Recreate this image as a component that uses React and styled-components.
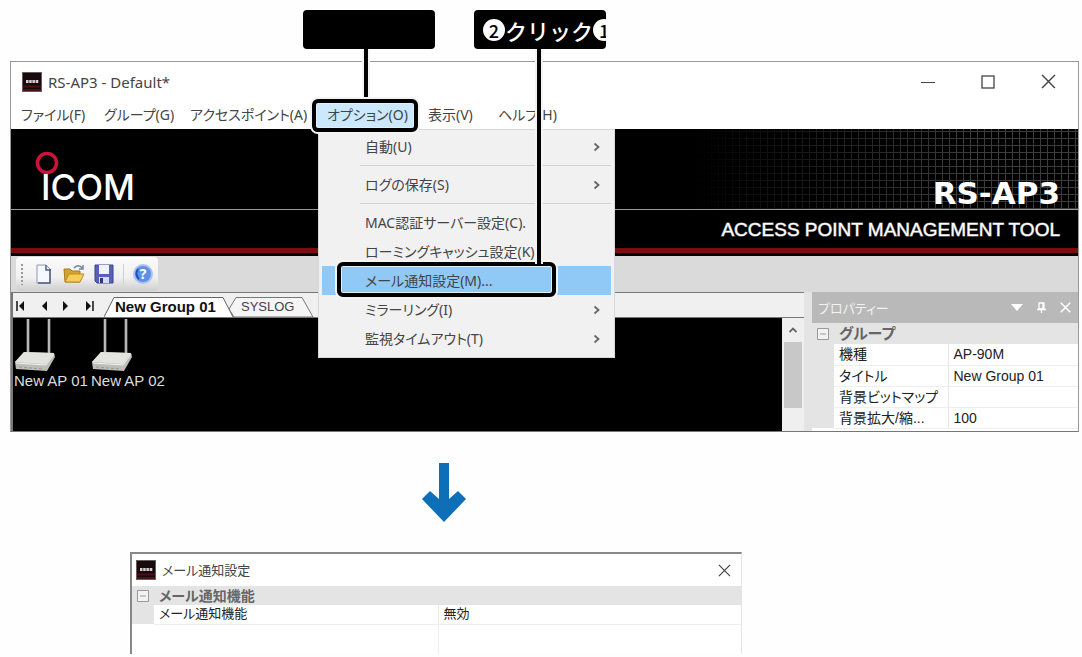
import React from "react";
import styled, { createGlobalStyle, css } from "styled-components";

const GlobalStyle = createGlobalStyle`
  * {
    box-sizing: border-box;
  }
  body {
    margin: 0;
    background: #fefefe;
    color: #444;
    font-family: "Noto Sans", "Noto Sans CJK JP", sans-serif;
    font-size: 14px;
    line-height: 20px;
    font-feature-settings: "palt";
  }
  button {
    margin: 0;
    padding: 0;
    border: 0;
    background: none;
    color: inherit;
    font: inherit;
    font-feature-settings: inherit;
    text-align: left;
    white-space: nowrap;
  }
  svg {
    display: block;
  }
`;

const Page = styled.main`
  padding: 10px 3px 4px 10px;
`;

/* callouts above the window */

const Callouts = styled.div`
  display: flex;
  gap: 39px;
  height: 51px;
  padding-left: 293px;
`;

const Callout = styled.div`
  position: relative;
  z-index: 5;
  width: 132px;
  height: 39px;

  &::after {
    content: "";
    position: absolute;
    top: 39px;
    left: ${(p) => p.$lineLeft}px;
    width: 4px;
    height: ${(p) => p.$lineHeight}px;
    background: #000;
    box-shadow: 2px 0 0 #f4f4f4, -2px 0 0 #f4f4f4;
  }
`;

const CalloutLabel = styled.div`
  display: flex;
  align-items: center;
  height: 39px;
  padding-left: 9px;
  overflow: hidden;
  border-radius: 4px;
  background: #000;
  color: #fff;
  font-family: "Noto Sans CJK JP", sans-serif;
  font-size: 22px;
  font-weight: 500;
  font-feature-settings: normal;
  white-space: nowrap;
`;

const Num = styled.span`
  flex: none;
  width: 22px;
  height: 22px;
  border-radius: 50%;
  background: #fff;
  color: #000;
  font-size: 18px;
  line-height: 22px;
  text-align: center;
`;

const Outline = styled.span`
  position: absolute;
  z-index: 6;
  top: ${(p) => p.$top}px;
  left: ${(p) => p.$left}px;
  width: ${(p) => p.$width}px;
  height: ${(p) => p.$height}px;
  border: 4px solid #000;
  border-radius: 6px;
  box-shadow: 0 0 0 2px #f4f4f4, inset 0 0 0 1px #e4eef5;
  pointer-events: none;
`;

/* main window */

const AppWindow = styled.section`
  border: 1px solid #999;
  border-bottom-color: #777;
  background: #fff;
`;

const TitleBar = styled.header`
  display: flex;
  align-items: center;
  height: ${(p) => p.$height}px;
  padding-left: ${(p) => p.$pad}px;
`;

const Title = styled.h1`
  flex: 1;
  margin: 0 0 0 6px;
  font-size: ${(p) => p.$size}px;
  font-weight: 400;
`;

const WindowButton = styled.button`
  display: flex;
  justify-content: center;
  width: ${(p) => p.$width}px;
`;

const MenuBar = styled.nav`
  display: grid;
  grid-template-columns: 83px 86px 137px 101px 70px 80px;
  height: 28px;
`;

const MenuCell = styled.div`
  position: relative;
`;

const MenuButton = styled.button`
  width: 100%;
  height: 28px;
  padding-left: 10px;
  ${(p) =>
    p.$open &&
    css`
      width: 96px;
      background: #cce8ff;
    `}
`;

const Dropdown = styled.ul`
  position: absolute;
  z-index: 3;
  top: 28px;
  left: 1px;
  width: 297px;
  margin: 0;
  padding: 3px 4px 5px;
  list-style: none;
  background: #f1f1f1;
  box-shadow: inset 0 0 0 1px #d8d8d8;
`;

const DropdownItem = styled.li`
  position: relative;
`;

const DropdownButton = styled.button`
  display: flex;
  align-items: center;
  justify-content: space-between;
  width: 100%;
  height: 29px;
  padding: 0 10px 0 43px;
  background: ${(p) => (p.$active ? "#90c8f6" : "transparent")};
`;

const Separator = styled.li`
  height: 9px;
  margin-left: 38px;
  border-bottom: 4px solid #f1f1f1;
  box-shadow: inset 0 -1px 0 #d2d2d2;
`;

/* brand banner */

const Banner = styled.div`
  background: #000;
  color: #fff;
`;

const BannerTop = styled.div`
  display: flex;
  justify-content: space-between;
  align-items: flex-end;
  height: 81px;
  padding: 0 18px 4px 24px;
  border-bottom: 1px solid #999;
  background: linear-gradient(90deg, #000 64%, transparent 90%),
    repeating-linear-gradient(90deg, #3c3c3c 0 1px, transparent 1px 7px),
    repeating-linear-gradient(0deg, #3c3c3c 0 1px, transparent 1px 7px), #000;
`;

const Brand = styled.div`
  height: 54px;
  font-family: Inter, sans-serif;
  font-size: 35px;
  font-weight: 500;
  line-height: 24px;

  span {
    padding-left: 6px;
  }
`;

const Product = styled.div`
  font-family: "DejaVu Sans", sans-serif;
  font-size: 31px;
  font-weight: 700;
  line-height: 24px;
`;

const BannerBottom = styled.div`
  height: 46px;
  padding: 10px 18px 0;
  border-bottom: 3px solid #000;
  box-shadow: inset 0 -5px 0 #7c0c10;
  font-family: "Liberation Sans", sans-serif;
  font-size: 19px;
  text-align: right;
  -webkit-text-stroke: 1px #ffffff88;
`;

const ToolbarRow = styled.div`
  height: 36px;
  padding: 1px 5px;
  background: #dadada;
`;

const Toolbar = styled.div`
  display: flex;
  align-items: center;
  gap: 9px;
  width: 142px;
  height: 34px;
  padding-left: 5px;
  border-radius: 4px;
  background: linear-gradient(#fbfbfb, #f0f0f0 60%, #cfcfcf);
`;

const Grip = styled.span`
  width: 2px;
  height: 21px;
  margin-right: 2px;
  background: repeating-linear-gradient(#999 0 2px, transparent 2px 4px);
`;

const ToolDivider = styled.span`
  width: 1px;
  height: 20px;
  background: #d0d0d0;
`;

/* work area */

const WorkArea = styled.div`
  display: flex;
  gap: 8px;
  background: #e4e4e4;
`;

const MapPane = styled.div`
  flex: 1;
  border-left: 2px solid #777;
`;

const TabStrip = styled.div`
  display: flex;
  align-items: flex-end;
  height: 26px;
  border-top: 1px solid #777;
  border-bottom: 1px solid #777;
  background: #f0f0f0;
  font-family: "Liberation Sans", sans-serif;
`;

const TabNav = styled.div`
  display: flex;
  align-items: center;
  justify-content: space-between;
  width: 78px;
  height: 23px;
  margin-left: 3px;
  margin-right: 10px;
`;

const TabButton = styled.button`
  position: relative;
  z-index: ${(p) => (p.$active ? 1 : 0)};
  width: ${(p) => p.$width}px;
  height: 20px;
  margin-left: ${(p) => (p.$active ? 0 : -8)}px;
  padding-left: ${(p) => (p.$active ? 11 : 15)}px;
  color: ${(p) => (p.$active ? "#111" : "#444")};
  font-size: ${(p) => (p.$active ? 15 : 13)}px;
  font-weight: ${(p) => (p.$active ? 700 : 400)};
  line-height: 18px;

  svg {
    position: absolute;
    z-index: -1;
    top: 0;
    left: 0;
  }
`;

const MapBody = styled.div`
  display: flex;
  height: 113px;
`;

const MapCanvas = styled.div`
  flex: 1;
  display: flex;
  align-items: flex-start;
  padding: 1px;
  background: #000;
`;

const AccessPoint = styled.figure`
  width: 77px;
  margin: 0;
  color: #ddd;
  font-family: "Liberation Sans", sans-serif;
  font-size: 15px;
  line-height: 18px;
  white-space: nowrap;
`;

const ScrollTrack = styled.div`
  display: flex;
  flex-direction: column;
  align-items: center;
  width: 22px;
  background: #efefef;
`;

const ScrollUp = styled.button`
  display: flex;
  align-items: center;
  justify-content: center;
  width: 100%;
  height: 24px;
`;

const ScrollThumb = styled.div`
  width: 18px;
  height: 66px;
  background: #c8c8c8;
`;

const PropertyPane = styled.aside`
  width: 266px;
  height: 139px;
  overflow: hidden;
  background: #fff;
`;

const PropertyHead = styled.div`
  display: flex;
  align-items: center;
  gap: 14px;
  height: 31px;
  padding: 0 7px 0 6px;
  background: #b9b9b9;
  color: #f2f2f2;

  h2 {
    flex: 1;
    margin: 0;
    font-size: 13px;
    font-weight: 400;
  }
`;

const PropertyTable = styled.table`
  width: 100%;
  border-collapse: collapse;
  table-layout: fixed;
  color: #222;
  font-family: "Liberation Sans", "Noto Sans CJK JP", sans-serif;
  font-size: ${(p) => p.$size}px;
  line-height: 18px;

  tr {
    height: ${(p) => p.$row}px;
  }
  th,
  td {
    padding: 0 0 0 5px;
    border-bottom: 1px solid #eee;
    text-align: left;
    font-weight: 400;
    white-space: nowrap;
  }
  td {
    border-left: 1px solid #e8e8e8;
  }
  th:first-child,
  td:first-child {
    padding: 0;
    border: 0;
    background: #e4e4e4;
  }
  .group th {
    border: 0;
    background: #e4e4e4;
    color: #666;
    font-size: ${(p) => p.$size + 1}px;
    font-weight: 700;
  }
`;

/* lower half */

const Arrow = styled.div`
  padding: 31px 0 0 412px;
  height: 120px;
`;

const Dialog = styled.section`
  max-width: 612px;
  margin-left: 120px;
  border: 1px solid #e4e4e4;
  border-top: 2px solid #888;
  border-left: 2px solid #888;
  border-bottom: 0;
  background: #fff;
`;

const DialogRest = styled.div`
  width: 307px;
  height: 29px;
  border-right: 1px solid #eee;
`;

const WindowIcon = () => (
  <svg width="20" height="20" viewBox="0 0 20 20" aria-hidden="true">
    <rect width="20" height="20" fill="#170b0e" />
    <path d="M1 14.5h18M1 18h18" stroke="#4b1018" strokeWidth="2" />
    <path d="M4 9.5h13" stroke="#d8cfd0" strokeWidth="3" strokeDasharray="2.5 .7" />
    <rect x="0.5" y="0.5" width="19" height="19" fill="none" stroke="#6b5a5c" />
  </svg>
);

const CloseGlyph = ({ size, color = "#444", width = 1.3 }) => (
  <svg width={size} height={size} viewBox="0 0 14 14" aria-hidden="true">
    <path d="M1 1l12 12M13 1L1 13" stroke={color} strokeWidth={width} />
  </svg>
);

const Chevron = ({ up }) => (
  <svg width="8" height="10" viewBox="0 0 8 10" aria-hidden="true">
    <path
      d={up ? "M0.5 7L4 3.5L7.5 7" : "M1.5 1.5L5.5 5L1.5 8.5"}
      fill="none"
      stroke="#666"
      strokeWidth="1.8"
    />
  </svg>
);

const NewFileIcon = () => (
  <svg width="20" height="20" viewBox="0 0 20 20" aria-hidden="true">
    <path d="M3 1h9l4 4v14H3z" fill="#f5f9ff" stroke="#8d9ab5" />
    <path d="M12 1v5h5M16 5v14H4" fill="none" stroke="#4e5f88" strokeWidth="1.5" />
  </svg>
);

const OpenIcon = () => (
  <svg width="22" height="20" viewBox="0 0 22 20" aria-hidden="true">
    <path d="M1 5h6l2 2h8v11H2z" fill="#d4a22e" stroke="#a67c22" />
    <path d="M2 18l4-8h15l-4 8z" fill="#f8cc58" stroke="#b88b28" />
    <path d="M11 4c3-3 6-3 8 0M20 1v4h-4" fill="none" stroke="#71859c" strokeWidth="1.5" />
  </svg>
);

const SaveIcon = () => (
  <svg width="20" height="20" viewBox="0 0 20 20" aria-hidden="true">
    <path d="M1 1h18v18H3l-2-2z" fill="#5960b8" stroke="#39438e" />
    <rect x="5" y="1" width="10" height="9" fill="#eef2ff" />
    <rect x="5" y="13" width="10" height="6" fill="#d6dcf2" />
    <rect x="6" y="14" width="3" height="5" fill="#303778" />
  </svg>
);

const HelpIcon = () => (
  <svg width="20" height="20" viewBox="0 0 20 20" aria-hidden="true">
    <circle cx="10" cy="10" r="9" fill="#5e91e5" stroke="#a9c2ef" strokeWidth="2" />
    <path d="M5 5c-2 3-2 7 1 10" fill="none" stroke="#2450b4" strokeWidth="2" />
    <text x="10" y="15" textAnchor="middle" fill="#fff" fontSize="14" fontWeight="700">?</text>
  </svg>
);

const RouterIcon = () => (
  <svg width="42" height="53" viewBox="0 0 42 53" aria-hidden="true">
    <path d="M14 0v36M35 0v36" stroke="#b9b9b9" strokeWidth="2.6" />
    <path d="M1 43L10 33l30 1 1 4-8 14-31-2z" fill="#bdbdb9" />
    <path d="M1 43l9-10 30 1-8 11z" fill="#e3e3df" />
    <path d="M2 44l30 2 8-11" fill="none" stroke="#f2f2ee" />
    <path d="M5 48l24 2" stroke="#989894" strokeDasharray="3 2" />
  </svg>
);

const BoxIcon = styled.svg`
  margin: 0 auto;
`;

const CollapseIcon = () => (
  <BoxIcon width="12" height="12" viewBox="0 0 12 12" aria-hidden="true">
    <path d="M.5 .5h11v11H.5zM3 6h6" fill="#f2f2f2" stroke="#999" />
  </BoxIcon>
);

const NavIcon = ({ dir, end }) => (
  <svg width="9" height="10" viewBox="0 0 9 10" aria-hidden="true">
    <g transform={dir === "prev" ? undefined : "translate(9 0) scale(-1 1)"}>
      {end && <path d="M1 0v10" stroke="#111" strokeWidth="1.5" />}
      <path d="M8 0v10L3 5z" fill="#111" />
    </g>
  </svg>
);

const menus = [
  "ファイル(F)",
  "グループ(G)",
  "アクセスポイント(A)",
  "オプション(O)",
  "表示(V)",
  "ヘルプ(H)",
];

const options = [
  { label: "自動(U)", sub: true },
  null,
  { label: "ログの保存(S)", sub: true },
  null,
  { label: "MAC認証サーバー設定(C)." },
  { label: "ローミングキャッシュ設定(K)." },
  { label: "メール通知設定(M)...", active: true },
  { label: "ミラーリング(I)", sub: true },
  { label: "監視タイムアウト(T)", sub: true },
];

const properties = [
  ["機種", "AP-90M"],
  ["タイトル", "New Group 01"],
  ["背景ビットマップ", ""],
  ["背景拡大/縮...", "100"],
];

function OptionMenu() {
  return (
    <Dropdown>
      {options.map((o, i) =>
        o === null ? (
          <Separator key={i} />
        ) : (
          <DropdownItem key={o.label}>
            <DropdownButton $active={o.active}>
              {o.label}
              {o.sub && <Chevron />}
            </DropdownButton>
            {o.active && <Outline $top={-4} $left={15} $width={219} $height={35} />}
          </DropdownItem>
        )
      )}
    </Dropdown>
  );
}

function MainWindow() {
  return (
    <AppWindow>
      <TitleBar $height={39} $pad={11}>
        <WindowIcon />
        <Title $size={15}>RS-AP3 - Default*</Title>
        <WindowButton $width={60} aria-label="Minimize">
          <svg width="14" height="14" viewBox="0 0 14 14">
            <path d="M0 7.5h14" stroke="#444" />
          </svg>
        </WindowButton>
        <WindowButton $width={60} aria-label="Maximize">
          <svg width="14" height="14" viewBox="0 0 14 14">
            <rect x="1" y="1" width="12" height="12" fill="none" stroke="#444" strokeWidth="1.3" />
          </svg>
        </WindowButton>
        <WindowButton $width={60} aria-label="Close">
          <CloseGlyph size={15} />
        </WindowButton>
      </TitleBar>
      <MenuBar>
        {menus.map((m, i) => (
          <MenuCell key={m}>
            <MenuButton $open={i === 3}>{m}</MenuButton>
            {i === 3 && <Outline $top={-2} $left={-5} $width={106} $height={33} />}
            {i === 3 && <OptionMenu />}
          </MenuCell>
        ))}
      </MenuBar>
      <Banner>
        <BannerTop>
          <Brand>
            <svg width="24" height="24" viewBox="0 0 24 24" aria-hidden="true">
              <circle cx="12" cy="12" r="9.5" fill="none" stroke="#cc1238" strokeWidth="3.6" />
            </svg>
            <span>ICOM</span>
          </Brand>
          <Product>RS-AP3</Product>
        </BannerTop>
        <BannerBottom>ACCESS POINT MANAGEMENT TOOL</BannerBottom>
      </Banner>
      <ToolbarRow>
        <Toolbar>
          <Grip />
          <button aria-label="New"><NewFileIcon /></button>
          <button aria-label="Open"><OpenIcon /></button>
          <button aria-label="Save"><SaveIcon /></button>
          <ToolDivider />
          <button aria-label="Help"><HelpIcon /></button>
        </Toolbar>
      </ToolbarRow>
      <WorkArea>
        <MapPane>
          <TabStrip>
            <TabNav>
              <button aria-label="First"><NavIcon dir="prev" end /></button>
              <button aria-label="Previous"><NavIcon dir="prev" /></button>
              <button aria-label="Next"><NavIcon dir="next" /></button>
              <button aria-label="Last"><NavIcon dir="next" end /></button>
            </TabNav>
            <TabButton $active $width={130}>
              <svg width="130" height="20" viewBox="0 0 130 20" aria-hidden="true">
                <path d="M0 20L10 .5H119L129 20" fill="#fff" stroke="#666" />
              </svg>
              New Group 01
            </TabButton>
            <TabButton $width={88}>
              <svg width="88" height="20" viewBox="0 0 88 20" aria-hidden="true">
                <path d="M3 12L10 .5H76L87 20H8z" fill="#f5f5f5" stroke="#777" />
              </svg>
              SYSLOG
            </TabButton>
          </TabStrip>
          <MapBody>
            <MapCanvas>
              {["New AP 01", "New AP 02"].map((name) => (
                <AccessPoint key={name}>
                  <RouterIcon />
                  <figcaption>{name}</figcaption>
                </AccessPoint>
              ))}
            </MapCanvas>
            <ScrollTrack>
              <ScrollUp aria-label="Scroll up"><Chevron up /></ScrollUp>
              <ScrollThumb />
            </ScrollTrack>
          </MapBody>
        </MapPane>
        <PropertyPane>
          <PropertyHead>
            <h2>プロパティー</h2>
            <button aria-label="Menu">
              <svg width="12" height="7" viewBox="0 0 12 7"><path d="M0 0h12L6 7z" fill="#fff" /></svg>
            </button>
            <button aria-label="Pin">
              <svg width="9" height="11" viewBox="0 0 9 11">
                <path d="M2 1h5v6H2zM0 7.5h9M4.5 7v4M6 1v6" fill="none" stroke="#fff" strokeWidth="1.3" />
              </svg>
            </button>
            <button aria-label="Close panel"><CloseGlyph size={11} color="#fff" width={2} /></button>
          </PropertyHead>
          <PropertyTable $size={14} $row={21}>
            <colgroup>
              <col width="22" />
              <col width="114" />
              <col />
            </colgroup>
            <tbody>
              <tr className="group">
                <td><CollapseIcon /></td>
                <th colSpan="2">グループ</th>
              </tr>
              {properties.map(([name, value]) => (
                <tr key={name}>
                  <td />
                  <th scope="row">{name}</th>
                  <td>{value}</td>
                </tr>
              ))}
            </tbody>
          </PropertyTable>
        </PropertyPane>
      </WorkArea>
    </AppWindow>
  );
}

function MailDialog() {
  return (
    <Dialog>
      <TitleBar $height={32} $pad={4}>
        <WindowIcon />
        <Title $size={13}>メール通知設定</Title>
        <WindowButton $width={34} aria-label="Close">
          <CloseGlyph size={13} />
        </WindowButton>
      </TitleBar>
      <PropertyTable $size={13} $row={19}>
        <colgroup>
          <col width="22" />
          <col width="284" />
          <col />
        </colgroup>
        <tbody>
          <tr className="group">
            <td><CollapseIcon /></td>
            <th colSpan="2">メール通知機能</th>
          </tr>
          <tr>
            <td />
            <th scope="row">メール通知機能</th>
            <td>無効</td>
          </tr>
        </tbody>
      </PropertyTable>
      <DialogRest />
    </Dialog>
  );
}

export default function App() {
  return (
    <Page>
      <GlobalStyle />
      <Callouts>
        <Callout $lineLeft={61} $lineHeight={51}>
          <CalloutLabel />
        </Callout>
        <Callout $lineLeft={63} $lineHeight={215}>
          <CalloutLabel>
            <Num>2</Num>
            クリック
            <Num>1</Num>
          </CalloutLabel>
        </Callout>
      </Callouts>
      <MainWindow />
      <Arrow>
        <svg width="44" height="59" viewBox="0 0 44 59" aria-hidden="true">
          <path d="M17 0h10v36l9-8 8 8-22 23L0 36l8-8 9 8z" fill="#0d6fb8" />
        </svg>
      </Arrow>
      <MailDialog />
    </Page>
  );
}
